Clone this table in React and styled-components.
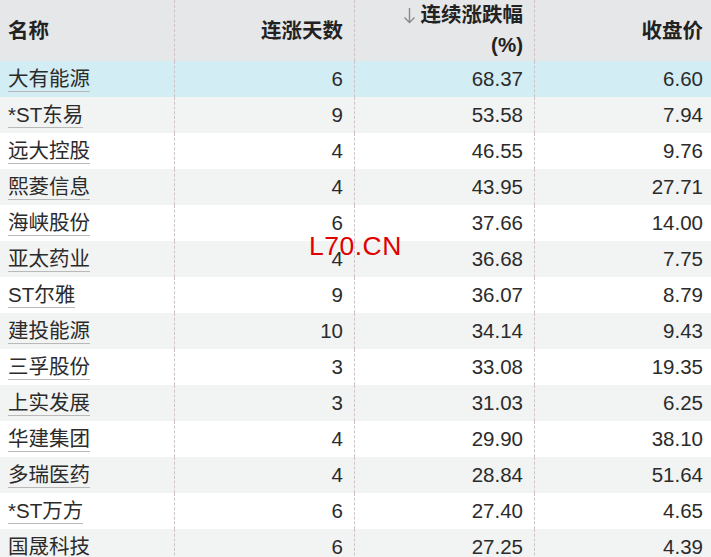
import React from 'react'
import styled, { createGlobalStyle } from 'styled-components'

const GlobalStyle = createGlobalStyle`
  html, body {
    margin: 0;
    padding: 0;
    background: #ffffff;
    overflow: hidden;
  }
`

const Page = styled.div`
  position: relative;
  width: 711px;
  height: 557px;
  overflow: hidden;
  font-family: 'Liberation Sans', 'Noto Sans CJK SC', sans-serif;
  color: #2b2b2b;
`

const Table = styled.div`
  width: 714px;
`

const Row = styled.div`
  display: grid;
  grid-template-columns: 174px 180px 180px 180px;
  height: ${p => (p.header ? '61px' : '36px')};
  background: ${p => p.bg};
`

const Cell = styled.div`
  display: flex;
  align-items: center;
  justify-content: ${p => (p.left ? 'flex-start' : 'flex-end')};
  padding: ${p => (p.left ? '0 0 0 8px' : '0 11px 0 0')};
  border-left: ${p => (p.first ? 'none' : '1px dashed #cdc3c8')};
  font-size: 20.5px;
  font-weight: ${p => (p.header ? 700 : 400)};
  color: ${p => (p.header ? '#222' : '#2b2b2b')};
  text-align: right;
  line-height: 30px;
  overflow: hidden;
  white-space: nowrap;
`

const HeadLines = styled.div`
  display: flex;
  flex-direction: column;
  align-items: flex-end;
  margin-top: -1px;
`

const HeadLine = styled.span`
  display: flex;
  align-items: center;
`

const SortIcon = styled.svg`
  width: 13px;
  height: 17px;
  margin-right: 5px;
  margin-top: 1px;
`

const NameLink = styled.span`
  display: inline-block;
  line-height: 24px;
  border-bottom: 1px solid #b9b9b9;
  color: #2b2b2b;
`

const Watermark = styled.div`
  position: absolute;
  left: 309px;
  top: 231px;
  font-family: 'Liberation Sans', sans-serif;
  font-size: 26.5px;
  color: #e00000;
  letter-spacing: 0.5px;
  pointer-events: none;
`

const rows = [
  ['大有能源', '6', '68.37', '6.60'],
  ['*ST东易', '9', '53.58', '7.94'],
  ['远大控股', '4', '46.55', '9.76'],
  ['熙菱信息', '4', '43.95', '27.71'],
  ['海峡股份', '6', '37.66', '14.00'],
  ['亚太药业', '4', '36.68', '7.75'],
  ['ST尔雅', '9', '36.07', '8.79'],
  ['建投能源', '10', '34.14', '9.43'],
  ['三孚股份', '3', '33.08', '19.35'],
  ['上实发展', '3', '31.03', '6.25'],
  ['华建集团', '4', '29.90', '38.10'],
  ['多瑞医药', '4', '28.84', '51.64'],
  ['*ST万方', '6', '27.40', '4.65'],
  ['国晟科技', '6', '27.25', '4.39'],
]

function rowColor(i) {
  if (i === 0) return '#d3edf4'
  return i % 2 === 1 ? '#f2f3f3' : '#ffffff'
}

export default function App() {
  return (
    <Page>
      <GlobalStyle />
      <Table>
        <Row header bg="#e6e7e9">
          <Cell header left first>名称</Cell>
          <Cell header>连涨天数</Cell>
          <Cell header>
            <HeadLines>
              <HeadLine>
                <SortIcon viewBox="0 0 13 17">
                  <path d="M6.5 1 V15.5 M1.5 10.5 L6.5 15.5 L11.5 10.5" fill="none" stroke="#8a8a8a" strokeWidth="1.4" />
                </SortIcon>
                连续涨跌幅
              </HeadLine>
              <span>(%)</span>
            </HeadLines>
          </Cell>
          <Cell header>收盘价</Cell>
        </Row>
        {rows.map((r, i) => (
          <Row key={r[0]} bg={rowColor(i)}>
            <Cell left first>
              <NameLink>{r[0]}</NameLink>
            </Cell>
            <Cell>{r[1]}</Cell>
            <Cell>{r[2]}</Cell>
            <Cell>{r[3]}</Cell>
          </Row>
        ))}
      </Table>
      <Watermark>L70.CN</Watermark>
    </Page>
  )
}
